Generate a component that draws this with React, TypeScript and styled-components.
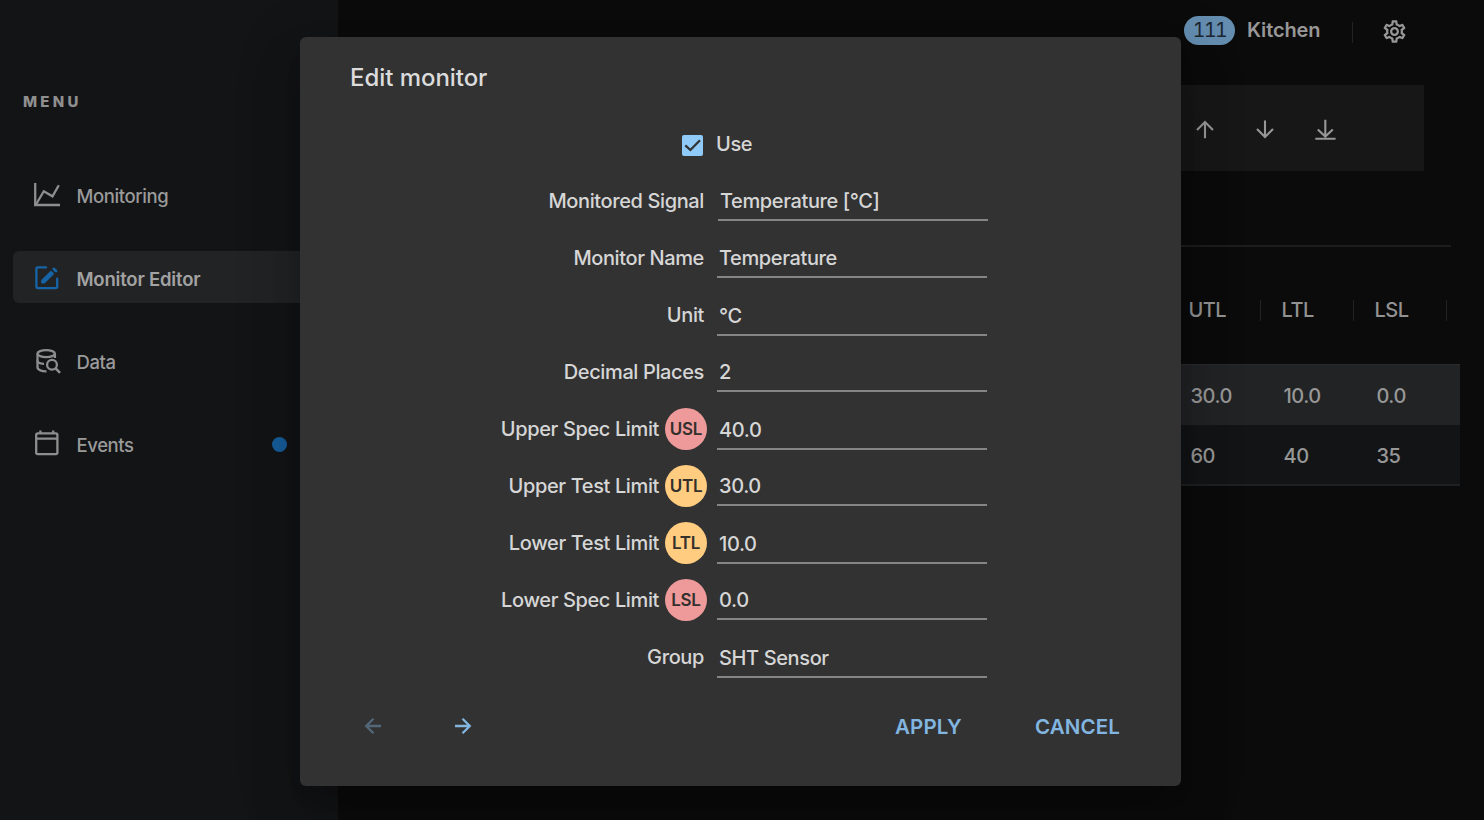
import React from "react";
import styled, { createGlobalStyle } from "styled-components";
import { MdOutlineSettings } from "react-icons/md";

const GlobalStyle = createGlobalStyle`
  * { box-sizing: border-box; }
  body {
    margin: 0;
    background: #0b0b0b;
    color: #979797;
    font-family: Inter, "Liberation Sans", sans-serif;
    overflow: hidden;
  }
`;

const Page = styled.div`
  position: relative;
  display: flex;
  width: 1484px;
  height: 820px;
  overflow: hidden;
`;

const Sidebar = styled.aside`
  width: 338px;
  padding: 92px 13px 0;
  background: #131416;
`;

const MenuTitle = styled.h2`
  margin: 0 0 56px 10px;
  font-size: 15px;
  line-height: 20px;
  font-weight: 800;
  letter-spacing: 3.2px;
  color: #8f8f8f;
`;

const Menu = styled.nav`
  display: flex;
  flex-direction: column;
  gap: 31px;
`;

const MenuItem = styled.a<{ $active?: boolean }>`
  display: flex;
  align-items: center;
  height: 52px;
  padding: 4px 0 0 19px;
  border-radius: 6px;
  background: ${(p) => (p.$active ? "#222325" : "transparent")};
  font-size: 18.5px;
  font-weight: ${(p) => (p.$active ? 600 : 550)};
  letter-spacing: ${(p) => (p.$active ? -0.2 : -0.4)}px;
  color: ${(p) => (p.$active ? "#a2a2a2" : "#9a9a9a")};

  svg {
    flex: none;
    margin: -3px 14.5px 0 0;
    color: ${(p) => (p.$active ? "#1665a8" : "#8e8e8e")};
  }
`;

const Dot = styled.i`
  width: 15px;
  height: 15px;
  margin: -2px 38.5px 0 auto;
  border-radius: 50%;
  background: #165d9b;
`;

const Main = styled.main`
  flex: 1;
  display: flex;
  flex-direction: column;
  padding: 0 24px 0 20px;
`;

const TopBar = styled.header`
  display: flex;
  align-items: center;
  justify-content: flex-end;
  height: 60px;
  padding-right: 52px;
  color: #979797;
`;

const CountBadge = styled.span`
  width: 51px;
  height: 29px;
  border-radius: 15px;
  background: #648db0;
  color: #1b2630;
  font-size: 19.5px;
  line-height: 29px;
  font-variant-numeric: tabular-nums;
  letter-spacing: -1.5px;
  text-align: center;
`;

const Location = styled.span`
  width: 105px;
  margin-left: 12px;
  font-size: 20px;
  font-weight: 600;
  letter-spacing: -0.15px;
`;

const Divider = styled.span`
  width: 1px;
  height: 21px;
  margin: 5px 28px 0 0;
  background: #222;
`;

const GearButton = styled.span`
  display: flex;
  margin-top: 3px;
  color: #979797;
`;

const Toolbar = styled.div`
  display: flex;
  align-items: center;
  justify-content: flex-end;
  gap: 34px;
  height: 86px;
  margin: 25px 36px 0 0;
  padding: 3px 86px 0 0;
  background: #171717;
  color: #979797;
`;

const Rule = styled.hr`
  width: calc(100% - 9px);
  height: 2px;
  margin: 74px 0 0;
  border: 0;
  background: #1d1d1d;
`;

const TableRow = styled.div<{ $kind: "head" | "selected" | "plain" }>`
  display: grid;
  grid-template-columns: repeat(3, 93px);
  justify-content: end;
  align-items: center;
  height: ${(p) => (p.$kind === "head" ? 117 : 61)}px;
  padding-right: ${(p) => (p.$kind === "head" ? 13 : 0)}px;
  padding-top: ${(p) => (p.$kind === "head" ? 10 : p.$kind === "plain" ? 2 : 1)}px;
  font-size: 20px;
  font-weight: 450;
  letter-spacing: -0.5px;
  color: ${(p) => (p.$kind === "head" ? "#929292" : "#979797")};
  background: ${(p) =>
    p.$kind === "selected" ? "#222325" : p.$kind === "plain" ? "#131416" : "transparent"};
  border-top: ${(p) => (p.$kind === "selected" ? "1px solid #2a2a2b" : "0")};
  border-bottom: ${(p) => (p.$kind === "plain" ? "2px solid #1f2021" : "0")};
`;

const HeadCell = styled.span`
  display: flex;
  align-items: center;
  height: 21px;
  padding: 0 0 2px 20.5px;
  border-right: 1px solid #222;
`;

const BodyCell = styled.span`
  padding-left: 9.5px;
`;

const Dialog = styled.section`
  position: absolute;
  left: 300px;
  top: 37px;
  width: 881px;
  height: 749px;
  padding: 26px 50px 0;
  display: flex;
  flex-direction: column;
  border-radius: 6px;
  background: #323232;
  color: #d6d6d6;
  box-shadow:
    0 14px 20px -9px rgba(0, 0, 0, 0.2),
    0 31px 49px 4px rgba(0, 0, 0, 0.14),
    0 12px 60px 10px rgba(0, 0, 0, 0.12);
`;

const DialogTitle = styled.h1`
  margin: 0;
  font-size: 24px;
  line-height: 30px;
  font-weight: 450;
  letter-spacing: -0.05px;
  color: #dcdcdc;
`;

const Form = styled.div`
  margin-top: 23px;
  font-size: 20px;
  font-weight: 450;
  line-height: 24px;
  letter-spacing: -0.38px;
`;

const CheckRow = styled.label`
  display: flex;
  align-items: center;
  gap: 13px;
  height: 57px;
  padding-left: 332px;
`;

const CheckBox = styled.span`
  display: flex;
  width: 21px;
  height: 21px;
  margin-top: 2px;
  border-radius: 2px;
  background: #90caf9;
  color: #323232;
`;

const CheckLabel = styled.span`
  padding-bottom: 2px;
`;

const Field = styled.div`
  display: flex;
  height: 57px;
`;

const Label = styled.label`
  display: flex;
  align-items: center;
  justify-content: flex-end;
  gap: 6px;
  width: 357px;
  padding-bottom: 2px;
`;

const LabelText = styled.span<{ $inset: number }>`
  margin-right: ${(p) => p.$inset}px;
`;

const LimitBadge = styled.span<{ $tone: "spec" | "test" }>`
  width: 42px;
  height: 42px;
  border-radius: 50%;
  background: ${(p) => (p.$tone === "spec" ? "#ef9a9a" : "#ffcc80")};
  color: #33302d;
  font-size: 17px;
  line-height: 42px;
  font-weight: 600;
  letter-spacing: -0.3px;
  text-align: center;
`;

const Value = styled.span<{ $drop: number; $shift: number }>`
  width: 270px;
  height: ${(p) => 48 + p.$drop}px;
  margin-left: ${(p) => 10 + p.$shift}px;
  padding: ${(p) => 16 + p.$drop}px 0 0 2px;
  border-bottom: 2px solid #858585;
`;

const Actions = styled.footer`
  display: flex;
  align-items: center;
  height: 42px;
  margin-top: 19px;
  padding: 0 11px;
  color: #82b6e0;
  font-size: 20.5px;
  font-weight: 600;
`;

const ArrowButton = styled.span<{ $disabled?: boolean }>`
  display: flex;
  width: 90px;
  opacity: ${(p) => (p.$disabled ? 0.4 : 1)};
`;

const TextButton = styled.span`
  margin-left: 73px;
  padding-top: 1px;
  letter-spacing: 0.15px;
`;

const ButtonGroup = styled.div`
  display: flex;
  margin-left: auto;
`;

const stroke = {
  fill: "none",
  stroke: "currentColor",
  strokeWidth: 2.3,
} as const;

const ChartIcon = () => (
  <svg width="30" height="30" viewBox="0 0 30 30" {...stroke}>
    <path d="M3.2 3V25H28" />
    <path d="M4 24.5L11.8 11.2L20.5 16.3L26.8 5.3" />
  </svg>
);

const EditIcon = () => (
  <svg width="30" height="30" viewBox="0 0 30 30" {...stroke} strokeLinejoin="round" strokeLinecap="round">
    <path d="M14 4.4H6A1.6 1.6 0 0 0 4.4 6V23.6A1.6 1.6 0 0 0 6 25.2H23.6a1.6 1.6 0 0 0 1.6-1.6V15.6" />
    <path d="M10 17.6L19 8.6L21.2 10.8L12.2 19.8H10Z" fill="currentColor" strokeWidth="1.6" />
    <path d="M21.8 5.9L24 8.1" strokeWidth="2.8" />
  </svg>
);

const DataIcon = () => (
  <svg width="30" height="30" viewBox="0 0 30 30" {...stroke}>
    <ellipse cx="14.2" cy="7.6" rx="8.7" ry="3.5" />
    <path d="M5.5 7.6V21.3C5.5 24 10 25.4 14.5 25.3" />
    <path d="M5.5 14.6C5.5 16.6 8.8 17.8 12 17.9M22.9 7.6V12" />
    <circle cx="20" cy="18.8" r="4.9" />
    <path d="M23.4 22.2L28 26.8" strokeWidth="2.6" />
  </svg>
);

const CalendarIcon = () => (
  <svg width="30" height="30" viewBox="0 0 30 30" {...stroke}>
    <rect x="4.2" y="4.4" width="21.2" height="20.8" rx="1.6" />
    <path d="M4.2 9.6H25.4M8.4 1.4V4.6M21.2 1.4V4.6" />
  </svg>
);

const ArrowUpIcon = () => (
  <svg width="26" height="26" viewBox="0 0 26 26" {...stroke} strokeWidth={2.1}>
    <path d="M13 21.2V5.5M5 13L13 5L21 13" />
  </svg>
);

const ArrowDownIcon = () => (
  <svg width="26" height="26" viewBox="0 0 26 26" {...stroke} strokeWidth={2.1}>
    <path d="M13 3.5V20M5 12L13 20L21 12" />
  </svg>
);

const DownloadIcon = () => (
  <svg width="26" height="26" viewBox="0 0 26 26" {...stroke} strokeWidth={2.1}>
    <path d="M13.3 2.8V19M5.8 12.4L13.3 19.6L20.8 12.4M3.3 21.8H23.6" />
  </svg>
);

const BackIcon = () => (
  <svg width="24" height="24" viewBox="0 0 24 24" {...stroke}>
    <path d="M20 12H5.5M12.5 4.7L5.2 12L12.5 19.3" />
  </svg>
);

const ForwardIcon = () => (
  <svg width="24" height="24" viewBox="0 0 24 24" {...stroke}>
    <path d="M4 12H18.5M11.5 4.7L18.8 12L11.5 19.3" />
  </svg>
);

const CheckIcon = () => (
  <svg width="21" height="21" viewBox="0 0 21 21" {...stroke}>
    <path d="M3.3 10.3L8.4 15L18 5.3" />
  </svg>
);

const menu = [
  { label: "Monitoring", icon: <ChartIcon /> },
  { label: "Monitor Editor", icon: <EditIcon />, active: true },
  { label: "Data", icon: <DataIcon /> },
  { label: "Events", icon: <CalendarIcon />, dot: true },
];

type FieldSpec = {
  label: string;
  value: string;
  badge?: string;
  tone?: "spec" | "test";
  drop?: number;
  shift?: number;
};

const fields: FieldSpec[] = [
  { label: "Monitored Signal", value: "Temperature [°C]", shift: 1 },
  { label: "Monitor Name", value: "Temperature" },
  { label: "Unit", value: "°C", drop: 1 },
  { label: "Decimal Places", value: "2" },
  { label: "Upper Spec Limit", value: "40.0", badge: "USL", tone: "spec", drop: 1 },
  { label: "Upper Test Limit", value: "30.0", badge: "UTL", tone: "test" },
  { label: "Lower Test Limit", value: "10.0", badge: "LTL", tone: "test", drop: 1 },
  { label: "Lower Spec Limit", value: "0.0", badge: "LSL", tone: "spec" },
  { label: "Group", value: "SHT Sensor", drop: 1 },
];

export default function App() {
  return (
    <Page>
      <GlobalStyle />
      <Sidebar>
        <MenuTitle>MENU</MenuTitle>
        <Menu>
          {menu.map((m) => (
            <MenuItem key={m.label} $active={m.active}>
              {m.icon}
              {m.label}
              {m.dot && <Dot />}
            </MenuItem>
          ))}
        </Menu>
      </Sidebar>

      <Main>
        <TopBar>
          <CountBadge>111</CountBadge>
          <Location>Kitchen</Location>
          <Divider />
          <GearButton>
            <MdOutlineSettings size={27} />
          </GearButton>
        </TopBar>
        <Toolbar>
          <ArrowUpIcon />
          <ArrowDownIcon />
          <DownloadIcon />
        </Toolbar>
        <Rule />
        <TableRow $kind="head">
          {["UTL", "LTL", "LSL"].map((h) => (
            <HeadCell key={h}>{h}</HeadCell>
          ))}
        </TableRow>
        <TableRow $kind="selected">
          {["30.0", "10.0", "0.0"].map((v) => (
            <BodyCell key={v}>{v}</BodyCell>
          ))}
        </TableRow>
        <TableRow $kind="plain">
          {["60", "40", "35"].map((v) => (
            <BodyCell key={v}>{v}</BodyCell>
          ))}
        </TableRow>
      </Main>

      <Dialog>
        <DialogTitle>Edit monitor</DialogTitle>
        <Form>
          <CheckRow>
            <CheckBox>
              <CheckIcon />
            </CheckBox>
            <CheckLabel>Use</CheckLabel>
          </CheckRow>
          {fields.map((f) => (
            <Field key={f.label}>
              <Label>
                <LabelText $inset={f.badge ? 0 : 3}>{f.label}</LabelText>
                {f.badge && <LimitBadge $tone={f.tone!}>{f.badge}</LimitBadge>}
              </Label>
              <Value $drop={f.drop ?? 0} $shift={f.shift ?? 0}>
                {f.value}
              </Value>
            </Field>
          ))}
        </Form>
        <Actions>
          <ArrowButton $disabled>
            <BackIcon />
          </ArrowButton>
          <ArrowButton>
            <ForwardIcon />
          </ArrowButton>
          <ButtonGroup>
            <TextButton>APPLY</TextButton>
            <TextButton>CANCEL</TextButton>
          </ButtonGroup>
        </Actions>
      </Dialog>
    </Page>
  );
}
